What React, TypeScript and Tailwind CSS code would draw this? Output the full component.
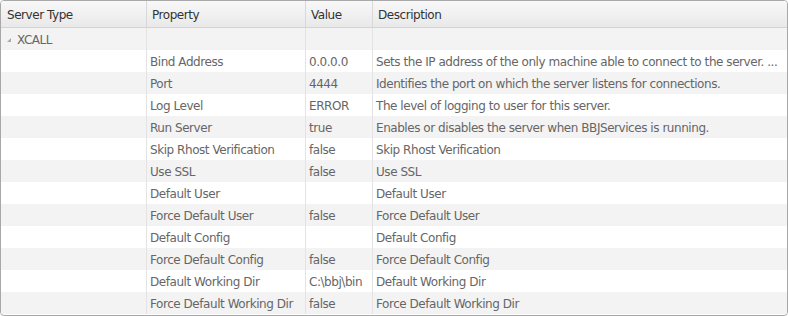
import React from "react";

const rows: [string, string, string][] = [
  ["Bind Address", "0.0.0.0", "Sets the IP address of the only machine able to connect to the server. ..."],
  ["Port", "4444", "Identifies the port on which the server listens for connections."],
  ["Log Level", "ERROR", "The level of logging to user for this server."],
  ["Run Server", "true", "Enables or disables the server when BBJServices is running."],
  ["Skip Rhost Verification", "false", "Skip Rhost Verification"],
  ["Use SSL", "false", "Use SSL"],
  ["Default User", "", "Default User"],
  ["Force Default User", "false", "Force Default User"],
  ["Default Config", "", "Default Config"],
  ["Force Default Config", "false", "Force Default Config"],
  ["Default Working Dir", "C:\\bbj\\bin", "Default Working Dir"],
  ["Force Default Working Dir", "false", "Force Default Working Dir"],
];

const cols = "grid grid-cols-[145px_159px_67px_1fr]";
const cell = "h-[22px] flex items-center pl-[3px] pr-[3px] pt-[2px] whitespace-nowrap overflow-hidden text-[#666]";
const sep = "border-l border-[#e3e3e3]";

export default function App() {
  return (
    <div className="w-[788px] h-[316px] bg-white">
      <div
        className="w-[788px] h-[316px] border border-[#a8a8a8] rounded-[4px] overflow-hidden bg-white"
        style={{ fontFamily: '"DejaVu Sans", Verdana, sans-serif' }}
      >
        <div className={`${cols} h-[27px] border-b border-[#d4d4d4] bg-gradient-to-b from-[#f8f8f8] to-[#e9e9e9] text-[12px] tracking-[-0.45px] text-[#333]`}>
          <div className="flex items-center pl-[6px] pt-[2px]">Server Type</div>
          <div className="flex items-center pl-[5px] pt-[2px] border-l border-[#d8d8d8]">Property</div>
          <div className="flex items-center pl-[5px] pt-[2px] border-l border-[#d8d8d8]">Value</div>
          <div className="flex items-center pl-[5px] pt-[2px] border-l border-[#d8d8d8]">Description</div>
        </div>
        <div className="text-[12px] tracking-[-0.45px]">
          <div className={`${cols} bg-[#f3f3f3]`}>
            <div className={`${cell} pl-[5px]`}>
              <svg width="6" height="6" viewBox="0 0 6 6" className="mr-[5px]">
                <polygon points="5,1 5,5 1,5" fill="#aaa" />
              </svg>
              <span>XCALL</span>
            </div>
            <div className={`${cell} ${sep}`}></div>
            <div className={`${cell} ${sep}`}></div>
            <div className={`${cell} ${sep}`}></div>
          </div>
          {rows.map((r, i) => (
            <div key={i} className={`${cols} ${i % 2 === 0 ? "bg-white" : "bg-[#f3f3f3]"}`}>
              <div className={cell}></div>
              <div className={`${cell} ${sep}`}>{r[0]}</div>
              <div className={`${cell} ${sep}`}>{r[1]}</div>
              <div className={`${cell} ${sep}`}>{r[2]}</div>
            </div>
          ))}
        </div>
      </div>
    </div>
  );
}
